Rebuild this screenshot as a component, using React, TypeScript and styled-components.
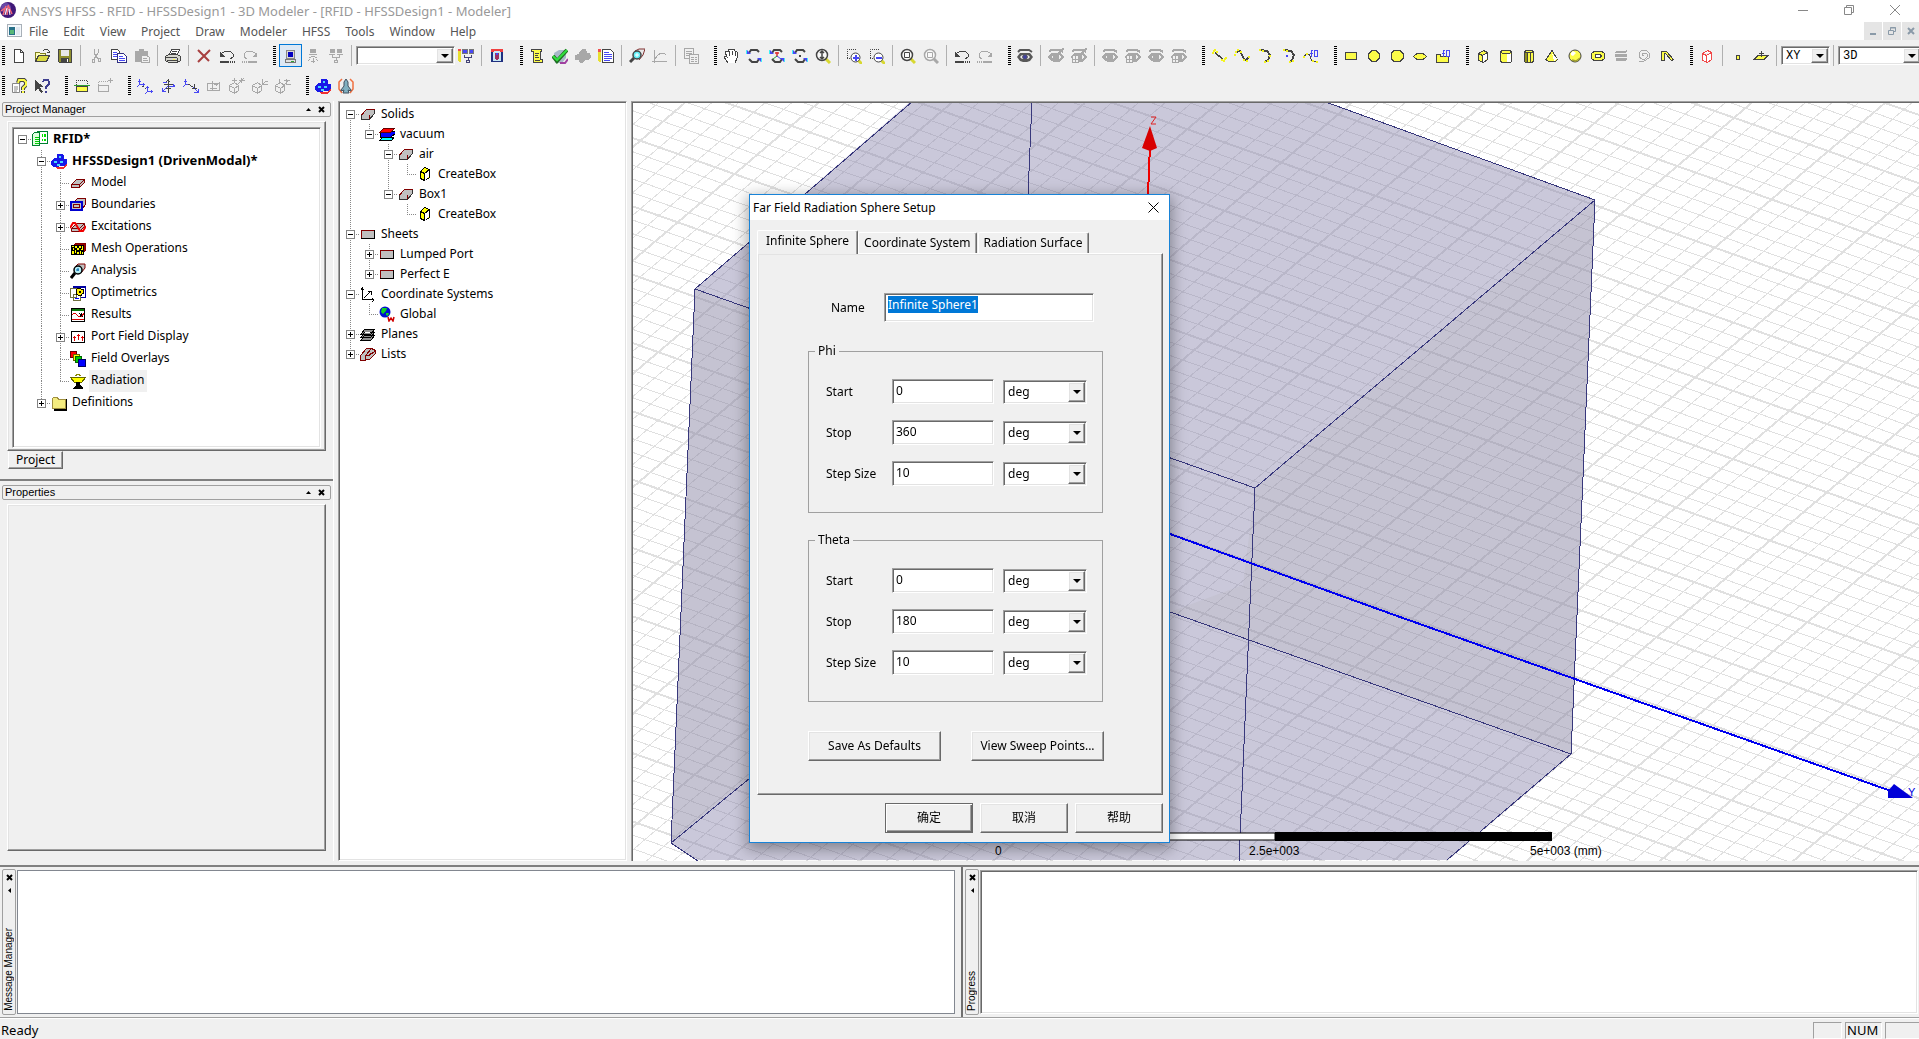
import React from 'react';
import styled, { createGlobalStyle, css } from 'styled-components';

const GlobalStyle = createGlobalStyle`
  *, *::before, *::after { box-sizing: border-box; }
  html, body, #root { height: 100%; }
  body { margin: 0; background: #f0f0f0; color: #000; overflow: hidden; }
  body, button, input, select { font: 12px/16px "Noto Sans", "Noto Sans CJK SC", sans-serif; }
  button, input, select { border-radius: 0; margin: 0; outline: none; }
`;

const sunken = css`
  border: 1px solid;
  border-color: #a0a0a0 #fff #fff #a0a0a0;
  box-shadow: inset 1px 1px #696969, inset -1px -1px #e3e3e3;
`;
const raised = css`
  border: 1px solid;
  border-color: #fff #696969 #696969 #fff;
  box-shadow: inset -1px -1px #a0a0a0, inset 1px 1px #e3e3e3;
`;

/* ---------- Icons ---------- */

const INK = '#444';
const YEL = '#fcfc48';
const BLU = '#4848f4';
const GRY = '#a8a8a8';
const MAR = '#800000';

const Svg = styled.svg`
  display: block;
  flex: none;
`;

const Pic = ({ children, smooth }: { children: React.ReactNode; smooth?: boolean }) => (
  <Svg width="16" height="16" viewBox="0 0 16 16" fill="none" aria-hidden="true" shapeRendering={smooth ? 'auto' : 'crispEdges'}>
    {children}
  </Svg>
);

const arcUndo = (c: string, flip = false) => (
  <g transform={flip ? 'translate(16 0) scale(-1 1)' : undefined}>
    <path d="M2 8l1-3 4-2h4l3 3v3l-3 2" stroke={c} />
    <path d="M1 4v5h5z" fill={c} />
    <path d="M1 13h9v2H1z" fill={c} />
    <path d="M11 13h1v2h-1zM13 13h1v2h-1zM15 13h1v2h-1z" fill={c} />
  </g>
);
const eye = (c: string, iris: string) => (
  <>
    <path d="M1 4l2-2h9l3 2" stroke={c} strokeWidth="2" />
    <path d="M0 9l3-4h10l3 4-3 4-3 1H6l-3-1z" fill={c} />
    <path d="M3 9l2-2h6l2 2-2 2H5z" fill="#eee" />
    <circle cx="8" cy="9" r="2.4" fill={iris} stroke={c} />
  </>
);
const eyeGrid = (
  <>
    {eye(GRY, GRY)}
    <path d="M1.500 7.500h6v7h-6z" fill="#f0f0f0" stroke={GRY} />
    <path d="M1 11h7M4.500 7v8" stroke={GRY} />
  </>
);
const slash = <path d="M10 6l6-6" stroke={GRY} strokeWidth="2" />;
const rotate = (mid: React.ReactNode) => (
  <>
    <path d="M3 5l2-3h6l2 2" stroke={INK} strokeWidth="2" />
    <path d="M13 11l-2 3H6l-3-3" stroke={INK} strokeWidth="2" />
    <path d="M1 2v4h4z" fill={BLU} />
    <path d="M15 14v-4h-4z" fill={BLU} />
    <path d="M0 2h1v4H0zM15 10h1v4h-1z" fill="#40f0f8" />
    {mid}
  </>
);
const lens = (c: string, handle: string, mid: React.ReactNode) => (
  <>
    <path d="M10 10l5 5" stroke={handle} strokeWidth="3" />
    <circle cx="7" cy="7" r="5.500" fill="#fff" fillOpacity="0.600" stroke={c} strokeWidth="1.500" />
    {mid}
  </>
);
const zoomBox = (mid: string) => (
  <>
    <path d="M1.500 10V1.500H10M1 10.500h4" stroke={INK} strokeDasharray="1 1" />
    <path d="M12 12l4 4" stroke="#d8d830" strokeWidth="3" />
    <circle cx="9.500" cy="9.500" r="4.500" fill="#fff" stroke={INK} />
    <path d={mid} stroke={BLU} strokeWidth="2" />
  </>
);
const axes = (a: string, b: string) => (
  <>
    <path d={a} stroke={BLU} />
    <path d={b} stroke={INK} />
  </>
);
const cubeGrey = (extra: string) => (
  <>
    <path d="M.5 7.500l5-3 4 3v5l-4 3-5-3zM.5 7.500l5 3 4-3M5.500 10v5" stroke={GRY} />
    <path d={extra} stroke={GRY} />
  </>
);
const dots = (pts: number[][]) => pts.map(([x, y]) => <rect key={`${x}-${y}`} x={x} y={y} width="2" height="2" fill="#f4f420" />);
const slab = (fill = '#c0c0c0', edge = MAR) => (
  <>
    <path d="M1.500 9.500l5-5h8v3l-5 5h-8z" fill={fill} stroke={edge} />
    <path d="M1.500 9.500h8l5-5M9.500 9.500v3" stroke={edge} />
  </>
);
const cubes = (
  <>
    <path d="M4 14h9l3-4v3l-4 3H6z" fill="#f03030" />
    <path d="M6 1h5l2 2v3h3v5l-3 2H9l-2 1H3l-3-2V8l3-3h3z" fill="#1818e8" />
    <path d="M8 3h2v2H8zM3 8h3v2H3zM9 8h3v2H9zM6 11h3v2H6z" fill="#48d8f8" />
  </>
);

const icons: Record<string, React.ReactNode> = {
  newFile: <path d="M3.500 1.500h6l3 3v10h-9zM9.500 1.500v3h3" fill="#fff" stroke={INK} />,
  open: (
    <>
      <path d="M1.500 13.500v-9h4l1 1h5v3" fill="#ffffb0" stroke="#808020" />
      <path d="M1.500 13.500l3-6h11l-3 6z" fill="#d8d840" stroke={INK} />
      <path d="M9 3l2-2h2l2 2v2M13 4h3" stroke={INK} />
    </>
  ),
  save: (
    <>
      <path d="M1.500 1.500h13v13h-12l-1-1z" fill="#909030" stroke={INK} />
      <path d="M4 2h8v6H4z" fill="#e8e8e8" />
      <path d="M4 10h8v5H4z" fill={INK} />
      <path d="M10 11h1v3h-1z" fill="#fff" />
    </>
  ),
  cut: (
    <>
      <path d="M6 1v4l4 6M10 1v4L6 11" stroke={GRY} />
      <path d="M4 11h2v3H4zM10 10h2v3h-2z" stroke={GRY} />
    </>
  ),
  copy: (
    <>
      <path d="M.5 1.500h6l2 2v8h-8z" fill="#fff" stroke={INK} />
      <path d="M2 4.500h4M2 6.500h5M2 8.500h4" stroke={BLU} />
      <path d="M6.500 5.500h6l3 3v6h-9z" fill="#fff" stroke="#303080" />
      <path d="M8 8.500h4M8 10.500h6M8 12.500h6" stroke={BLU} />
    </>
  ),
  paste: (
    <>
      <path d="M1 3h13v11H1zM5 1h5v3H5z" fill={GRY} />
      <path d="M7.500 7.500h5l3 2v5h-8z" fill="#f0f0f0" stroke={GRY} />
      <path d="M9 10.500h4M9 12.500h5" stroke={GRY} />
    </>
  ),
  print: (
    <>
      <path d="M4.500 6.500l2-5h8l-2 5" fill="#fff" stroke={INK} />
      <path d="M7 3.500h5M6 5.500h5" stroke={INK} />
      <path d="M.5 8.500l3-2h9l3 2v4l-3 2h-9l-3-2z" fill="#d8d8d0" stroke={INK} />
      <path d="M1 9.500h11M2 12.500h10M12.500 10v4" stroke={INK} />
      <path d="M8 11h2v1H8z" fill={YEL} />
    </>
  ),
  remove: <path d="M2 2l6 6 6-6M2 14l6-6 5 5" stroke="#a84040" strokeWidth="2" />,
  undo: arcUndo(INK),
  redo: arcUndo(GRY, true),
  localPc: (
    <>
      <path d="M4.500 2.500h8v8h-8z" fill="#d8d8d8" stroke="#888" />
      <path d="M6 4h5v5H6z" fill="#0000c0" />
      <path d="M3.500 11.500h10v3h-10z" fill="#e0e0e0" stroke="#777" />
      <path d="M9 13h3v1H9z" fill="#30a030" />
    </>
  ),
  remotePc: (
    <>
      <path d="M5 1h6v4H5zM4 6h8v1H4z" fill={GRY} />
      <path d="M4 10l4-2 4 2M3 13l2-2M8.500 10v5M13 13l-2-2M6 13.500h4" stroke={GRY} />
    </>
  ),
  network: (
    <>
      <path d="M2 1h5v4H2zM9 1h5v4H9zM1 6h6v1H1zM9 6h6v1H9z" fill={GRY} />
      <path d="M4.500 7v2.500h7V7M8.500 10v2M6.500 12.500h3v2h-3z" stroke={GRY} />
    </>
  ),
  netEdit: (
    <>
      <path d="M0 2h3v11l-1 2-2-2z" fill="#e8e030" />
      <path d="M0 1h3v2H0z" fill="#f05050" />
      <path d="M4.500 1.500h5v4h-5zM11.500 1.500h4v4h-4z" fill={BLU} stroke="#777" />
      <path d="M6.500 7v2.500h7V7M10.500 10v2M8.500 12.500h3v2h-3z" stroke="#447" />
    </>
  ),
  filter: (
    <>
      <path d="M2.500 2.500h11v11h-11z" fill="#c8e8f4" stroke="#203080" />
      <path d="M2 1h12v3h-2l-2-1H6L4 4H2z" fill="#f04040" />
      <path d="M3 4h1v9H3zM12 4h1v9h-1z" fill="#203080" />
      <path d="M6 5h4v6l-2 1-2-1z" fill="#a03060" />
      <path d="M7 5h2v2H7z" fill={BLU} />
    </>
  ),
  notes: (
    <>
      <path d="M2.500 1.500h10v2h-1v8h2v3h-9v-11h-2z" fill={YEL} stroke={INK} />
      <path d="M6 5.500h4M6 7.500h3M6 9.500h4M6 12.500h5" stroke={INK} />
    </>
  ),
  check: (
    <>
      <path d="M2 5l5-3h7v8l-4 5H3z" fill="#a8b8c8" />
      <path d="M8 15h5l3-4" stroke="#a040a0" strokeWidth="2" />
      <path d="M1 8l4 5L15 2" stroke="#207020" strokeWidth="4" />
      <path d="M1 8l4 4L15 2" stroke="#30e040" strokeWidth="2" />
    </>
  ),
  solve: <path d="M5 3l2-2h4l1 4h3l1 4-3 3h-3l-2 3H5l-1-3H0V7l4-1z" fill={GRY} />,
  noteEdit: (
    <>
      <path d="M0 3h3v10l-1 2-2-2z" fill="#e8e030" />
      <path d="M0 1h3v3H0z" fill="#f05050" />
      <path d="M4.500 1.500h8l3 3v10h-11z" fill="#fff" stroke={INK} />
      <path d="M6 4.500h5M6 6.500h8M6 8.500h8M6 10.500h8M6 12.500h6" stroke={BLU} />
    </>
  ),
  probe: (
    <>
      <path d="M6 3l4-2h6l-2 6-4 5" fill="#e8e8e8" stroke="#803030" />
      <path d="M5 10l-4 4" stroke={INK} strokeWidth="3" />
      <circle cx="8" cy="7" r="4" fill="#60f0f8" stroke={INK} strokeWidth="1.500" />
      <path d="M8 5v4M6 7h4" stroke="#fff" />
    </>
  ),
  plot: <path d="M2.500 2v13M0 13.500h15M3 11l3-4 3-2h3l2 2" stroke={GRY} />,
  report: (
    <>
      <path d="M1.500.5h9v10h-9zM3 3.500h6M3 5.500h6M3 7.500h4" stroke={GRY} />
      <path d="M6.500 6.500h9v9h-9z" fill="#f0f0f0" stroke={GRY} />
      <path d="M8 9.500h3M12 9.500h2M8 11.500h3M12 11.500h2M8 13.500h3M12 13.500h2" stroke={GRY} />
    </>
  ),
  hand: <path d="M5 15L1 9l1-1 2 1-2-5 1-1 2 1 1-3h2l1 1 2-1 1 2 2 1v6l-2 5M6 8V3M9 7V3M12 8V4" fill="#fff" stroke={INK} />,
  rotate: rotate(null),
  rotateAxis: rotate(
    <>
      <path d="M8 9V4M6 5h4" stroke="#e03030" strokeWidth="1.500" />
      <path d="M8 8l4 3" stroke={BLU} />
      <path d="M8 8l-4 3" stroke="#30a030" />
    </>,
  ),
  rotateDot: rotate(<path d="M7 7h2v2H7z" fill={INK} />),
  zoom: lens(INK, '#d8d830', <path d="M7 3v8M5 5l2-2 2 2M5 9l2 2 2-2" stroke={INK} strokeWidth="1.500" />),
  zoomIn: zoomBox('M7 10h6M10 7v6'),
  zoomOut: zoomBox('M7 10h6'),
  fit: lens(INK, '#d8d830', <path d="M4.500 4.500h5v5h-5z" stroke={INK} />),
  fitSel: lens(GRY, GRY, <path d="M4.500 4.500h5v5h-5z" stroke={GRY} />),
  eye: eye('#585858', '#4040a0'),
  eyeOff: <>{eye(GRY, GRY)}{slash}</>,
  eyeGridOff: <>{eyeGrid}{slash}</>,
  eyeShow: eye(GRY, GRY),
  eyeGrid,
  line: (
    <>
      <path d="M4 5l8 6" stroke={INK} strokeWidth="1.500" />
      {dots([[1, 4], [3, 1], [5, 3], [2, 2], [10, 11], [12, 12], [14, 9], [13, 10]])}
    </>
  ),
  spline: (
    <>
      <path d="M2 5l2-2h2l4 8 2 1 2-2" stroke={INK} strokeWidth="1.500" />
      {dots([[0, 6], [1, 3], [3, 1], [6, 3], [9, 11], [12, 12], [14, 8]])}
    </>
  ),
  arc: (
    <>
      <path d="M4 2l6 1 3 4-2 5-3 2" stroke={INK} strokeWidth="2" />
      {dots([[2, 1], [5, 2], [12, 7], [7, 13], [10, 12]])}
    </>
  ),
  arcCenter: (
    <>
      <path d="M5 2l6 1 3 4-2 5-2 2" stroke={INK} strokeWidth="2" />
      {dots([[3, 1], [6, 2], [9, 13], [12, 12]])}
      <path d="M6 7h2v2H6z" fill={BLU} />
    </>
  ),
  eqCurve: (
    <>
      <path d="M1 9l2-3h3l3 7 5 1" stroke={INK} />
      {dots([[0, 8], [3, 5], [9, 12], [13, 13]])}
      <path d="M8.500 9V3l2-1.500M7 5.500h3M11.500 2.500v6h3v-6z" stroke={BLU} />
    </>
  ),
  rect: <path d="M2.500 4.500h11v7h-11z" fill={YEL} stroke={INK} />,
  circle: <path d="M6 2.500h4l3.500 3.500v4L10 13.500H6L2.500 10V6z" fill={YEL} stroke={INK} />,
  hexagon: <path d="M5 2.500h6l3 3v5l-3 3H5l-3-3v-5z" fill={YEL} stroke={INK} />,
  ellipse: <path d="M5 5.500h6l3.500 3L11 11.500H5L1.500 8.500z" fill={YEL} stroke={INK} />,
  eqSurface: (
    <>
      <path d="M1.500 14.500v-8h4v2h8v6z" fill={YEL} stroke={INK} />
      <path d="M8.500 9V3l2-1.500M7 5.500h3M11.500 2.500v6h3v-6z" stroke={BLU} />
    </>
  ),
  box: (
    <>
      <path d="M3.500 5.500l5-3 4 2v7l-4 3-5-2z" fill={YEL} stroke={INK} />
      <path d="M8 7l4-2v6l-4 3z" fill="#fff" />
      <path d="M3.500 5.500l4 2 5-3M7.500 7.500v7" stroke={INK} />
    </>
  ),
  cylinder: (
    <>
      <path d="M2.500 3.500l2-1h7l2 1v10l-2 1h-7l-2-1z" fill={YEL} stroke={INK} />
      <path d="M9 6h4v8H9z" fill="#fff" />
      <path d="M3 4.500l2 1h6l2-1" stroke={INK} />
    </>
  ),
  prism: (
    <>
      <path d="M3.500 3.500l2-1h5l2 1v10l-2 1h-5l-2-1z" fill={YEL} stroke={INK} />
      <path d="M4 5h2v9H4z" fill="#909020" />
      <path d="M3.500 4.500h9M6.500 5v9M9.500 5v9" stroke={INK} />
    </>
  ),
  cone: (
    <>
      <path d="M8 2.500l5.500 9-2 2h-7l-2.500-2z" fill={YEL} stroke={INK} />
      <path d="M8 5l5 6-3 2z" fill="#fff" />
    </>
  ),
  sphere: (
    <>
      <circle cx="8" cy="8" r="6" fill={YEL} stroke={INK} />
      <path d="M4 5l2-2 3 2-3 3-2-1z" fill="#fff" />
      <path d="M13 10l-4 3-4-1" stroke="#a0a030" strokeWidth="1.500" />
    </>
  ),
  torus: (
    <>
      <path d="M4 3.500h8l2.500 2v5l-2.500 2H4l-2.500-2v-5z" fill={YEL} stroke={INK} />
      <path d="M6 6.500h4l1 1v1l-1 1H6l-1-1v-1z" fill="#fff" stroke={INK} />
    </>
  ),
  helix: <path d="M3 3h9l2-1v2l-2 1H2zM2 6h12v3H2zM3 10h11v2l-2 1H3z" fill={GRY} />,
  spiral: <path d="M3 13h5l5-3V5l-3-3H6L3 5v4l3 2h3l2-2V6L9 5 7 5 6 7l2 1" stroke={GRY} />,
  bend: <path d="M2.500 12.500v-9h5l7 8-2 1-6-7h-1v7z" fill={YEL} stroke={INK} />,
  region: <path d="M3.500 5.500l5-3 4 2v7l-4 3-5-2zM3.500 5.500l4 2 5-3M7.500 7.500v7" fill="#fff" stroke="#f04848" />,
  point: <path d="M6.500 7.500h3v4h-3z" fill={YEL} stroke={INK} />,
  plane: (
    <>
      <path d="M1 11.500l4-4h10l-4 4z" fill={YEL} stroke={INK} />
      <path d="M8.500 3v6M6 5.500h5" stroke={INK} />
    </>
  ),
  helpDoc: (
    <>
      <path d="M1.500 5.500h7v9h-7z" fill="#fff" stroke="#888" />
      <path d="M3 9h4M3 11h4M3 13h3" stroke="#888" />
      <path d="M7 5l1-3h5l2 2v3l-3 3v2M12 13v2" stroke={INK} strokeWidth="4" />
      <path d="M7 5l1-3h5l2 2v3l-3 3v2M12 13v2" stroke={YEL} strokeWidth="2" />
    </>
  ),
  whatsThis: (
    <>
      <path d="M1 2v11l3-3 3 5 2-1-3-5h4z" fill={INK} />
      <path d="M9 4l1-2h4l1 2v2l-3 3v2M12 13v2" stroke="#404090" strokeWidth="2" />
    </>
  ),
  cutPlane: (
    <>
      <path d="M2.500 7V2.500h11V7" stroke={INK} strokeDasharray="1 1" />
      <path d="M2.500 8.500h11v5h-11z" fill={YEL} stroke={INK} />
      <path d="M0 7h16v1H0z" fill="#30a030" />
    </>
  ),
  cutPlaneAdd: (
    <>
      <path d="M1.500 7V3.500h9" stroke={GRY} strokeDasharray="1 1" />
      <path d="M1.500 7.500h10v6h-10zM11 2.500h5M13.500 0v5" stroke={GRY} />
    </>
  ),
  moveAxes: axes('M2.500 1v5.500h5M1 3.500h3M6.500 5v3M2 7l-2 2M10.500 8v5.500h5M9 9.500h3M14.500 12v3M10 14l-2 2', 'M5 8l2 1M8 10l1 1'),
  rotateAxes: axes('M8 8.500h6M8 8l-5 5M3 4.500h4M13 6l2 3M2.500 10v3.500H6', 'M8.500 1v14M6 4l2-2 2 2M4 6.500h9M6 10.500h5'),
  offsetAxes: axes('M2.500 1v5.500h4M1 3.500h3M2 7l-2 2M10 9l5 5M15.500 11v4M10.500 14.500h5', 'M5 6l5 3M11.500 6v4M9 10.500h5'),
  faceCs: <path d="M1.500 5.500h12v7h-12zM4 10.500h7M6.500 12V3M10 8l4-4M8 6.500h3" stroke={GRY} />,
  boxCs1: cubeGrey('M5.500 0v5M3 2.500h5M9.500 2.500H16M12.500 0v5M9 6l6-6'),
  boxCs2: cubeGrey('M10.500 1v5.500h5M9 8l5-5M13 3.500h3'),
  boxCs3: cubeGrey('M11.500 1v5.500h4M8 8l6-6M4.500 1v5M9 2.500h6'),
  design: cubes,
  plane3d: (
    <>
      <path d="M4 1L1 4v7l3 4M12 1l3 3v7l-3 4" stroke="#f07040" strokeWidth="1.500" />
      <path d="M8 1l2 3v4l3 4v1l-3-1 1 3H5l1-3-3 1v-1l3-4V4z" fill="#80b0c0" stroke="#405060" />
    </>
  ),
  app: (
    <>
      <circle cx="8" cy="8" r="8" fill="#401878" />
      <circle cx="6" cy="6" r="5" fill="#6848a8" />
      <path d="M3 13L6 4M7 13l1-9M12 12L8 3M1 9l4-3" stroke="#f06878" strokeWidth="1.500" />
      <path d="M5 13l2-7M10 13l-1-6" stroke="#fff" />
    </>
  ),
  mdi: (
    <>
      <path d="M1.500 2.500h14v12h-14z" fill="#f4f8fc" stroke="#a8b0b8" />
      <path d="M3 5h6v8H3z" fill="#287088" />
      <path d="M4 8h4v4H4z" fill="#58b878" />
      <path d="M10 5h4v8h-4z" fill="#e0e8f0" />
    </>
  ),
  project: (
    <>
      <path d="M5.500.5h10v12h-10z" fill="#fff" stroke="#008030" />
      <path d="M10 3h1v3h-1zM12 3h2v3h-2zM10 8h1v2h-1zM12 8h2v2h-2z" fill="#00e000" />
      <path d="M.5 3.500l2-2h5v13h-7z" fill="#e0ffe0" stroke="#008030" />
      <path d="M3 6h4v1H3zM3 8h4v1H3zM3 10h4v1H3zM3 12h4v1H3z" fill="#00d000" />
    </>
  ),
  model: slab(),
  boundaries: (
    <>
      <path d="M4.500 4.500l3-3h8v6l-3 4" fill="#c0c0c0" stroke={MAR} />
      <path d="M1 5h11v8H1z" fill="#c0c0c0" stroke="#0000d0" strokeWidth="2" />
      <path d="M3.500 7.500h6v3h-6z" stroke={MAR} />
    </>
  ),
  excitations: (
    <>
      {slab()}
      <path d="M0 9l3-5 2 0 5 8h3l3-5" stroke="#f00000" strokeWidth="2" />
    </>
  ),
  mesh: (
    <>
      <path d="M3 5l3-3h9v8l-3 3" fill="#900" stroke={MAR} />
      <path d="M1 4h13v10H1z" fill="#000" />
      <path d="M2 5h2v1H2zM5 5h2v2H5zM9 5h2v2H9zM12 5h1v3h-1zM3 7h1v2H3zM7 7h2v2H7zM11 8h2v1h-2zM2 10h2v3H2zM5 9h1v3H5zM7 11h2v2H7zM10 10h1v3h-1zM12 11h1v2h-1z" fill="#ff0" />
    </>
  ),
  analysis: (
    <>
      <path d="M5 4l3-3h7v4l-4 5" fill="#c0c0c0" stroke={MAR} />
      <path d="M5 10l-4 5" stroke="#000" strokeWidth="3" />
      <circle cx="8" cy="7" r="4" fill="#b8f0f8" stroke="#000" strokeWidth="1.500" />
      <path d="M8 5v3M6 7h3" stroke="#06a" />
    </>
  ),
  optimetrics: (
    <>
      <path d="M3.500 1.500h12v11h-12z" fill="#fff" stroke="#0000a0" />
      <path d="M4 1h12v2H4z" fill="#0000a0" />
      <path d="M.5 3.500h6v9h-6zM3.500 9.500h7v6h-7z" fill="#fff" stroke="#707040" />
      <path d="M9 3l2 1 2 0 0 2 1 2-2 1-1 2-3-1-2-1 0-3 1-2z" fill="#fe0" stroke="#000" />
      <path d="M9 6h2v2H9z" fill="#000" />
      <path d="M5 13h4v1H5z" fill="#00f" />
    </>
  ),
  results: (
    <>
      <path d="M1.500 1.500h13v13h-13z" fill="#fff" stroke="#000" />
      <path d="M2 2h12v2H2z" fill="#087808" />
      <path d="M2 8l2-2 2 1 3 3 3-1 2-3M2 12.500h12" stroke="#e00000" />
      <path d="M9 6l4 4M12 6l-2 4" stroke="#000" />
    </>
  ),
  port: (
    <>
      <path d="M1.500 2.500h13v11h-13z" fill="#fff" stroke="#000" />
      <path d="M4.500 12V7M3 8.500h3M8.500 11V5M7 6.500h3M12.500 12V7M11 8.500h3" stroke="#e00000" />
    </>
  ),
  overlays: (
    <>
      <path d="M.5.500h6v6h-6z" fill="#f00" stroke="#600" />
      <path d="M3.500 3.500h6v6h-6z" fill="#ff0" stroke="#660" />
      <path d="M5.500 5.500h6v6h-6z" fill="#0c0" stroke="#060" />
      <path d="M8.500 8.500h7v7h-7z" fill="#00f" stroke="#006" />
    </>
  ),
  radiation: (
    <>
      <path d="M5 3l3-2 3 2" stroke="#880" />
      <path d="M.5 4.500h15l-4 5h-7z" fill="#ff0" stroke="#660" />
      <path d="M6 9h4v3l3 3v1H3v-1l3-3z" fill="#000" />
    </>
  ),
  folder: (
    <>
      <path d="M15.500 4v10.500H3" stroke="#000" strokeWidth="2" />
      <path d="M1.500 13.500v-10l1-1h4l1 2h7v9z" fill="#f4ec80" stroke="#a09040" />
    </>
  ),
  solid: (
    <>
      <path d="M1.500 8.500l5-5h8v4l-5 6h-8z" fill="#c0c0c0" stroke="#333" />
      <path d="M1.500 9l5-5.500h8M9.500 13V9" stroke={MAR} />
    </>
  ),
  material: (
    <>
      <path d="M1 14l3-3h11l-2 3z" fill="#0ff" stroke="#000" />
      <path d="M1 11V8l4-3h11v3l-4 3z" fill="#00f" stroke="#000" />
      <path d="M1 6l4-4h11l-4 4z" fill="#f00" stroke="#600" />
    </>
  ),
  createBox: (
    <>
      <path d="M3.500 5.500l4-4 5 2v8l-5 3-4-2z" fill="#ff0" stroke="#000" />
      <path d="M8 7l4-2v6l-4 3z" fill="#fff" />
      <path d="M3.500 5.500l4 2 5-4M7.500 7.500v7" stroke="#000" />
    </>
  ),
  sheet: (
    <>
      <path d="M1.500 4.500h13v8h-13z" fill="#c0c0c0" stroke="#000" />
      <path d="M1.500 12V4.500H14" stroke={MAR} />
    </>
  ),
  coords: <path d="M2.500 2v11.500H14M1 4l1.500-2L4 4M12 12l2 2-2 2M4 12l7-7M8 5.500h3v3" stroke="#000" />,
  globe: (
    <>
      <circle cx="6" cy="6" r="5.500" fill="#0010d0" />
      <path d="M3 2h5l-1 3-3 3-2-2zM7 7h3l-1 3-2-1z" fill="#10d020" />
      <path d="M9 11l1 4 2-3 2 3 1-4" stroke="#d00000" strokeWidth="1.500" />
    </>
  ),
  planes: (
    <>
      <path d="M1 11l4-5h10l-4 5zM1 14l4-5h10l-4 5zM1 8l4-5h10l-4 5z" fill="#909090" stroke="#000" />
      <path d="M5 6.500h5" stroke="#fff" />
    </>
  ),
  lists: (
    <>
      <path d="M.5 9.500l6-7h5v4l-6 8h-5z" fill="#c0c0c0" stroke={MAR} />
      <path d="M5.500 9.500l6-7 4 2v3l-6 6h-4zM5.500 9.500h4l6-5" fill="#c0c0c0" stroke={MAR} />
    </>
  ),
};

const smoothIcons = new Set(['app', 'globe', 'sphere', 'zoom', 'fit', 'fitSel', 'probe', 'analysis', 'check', 'remove', 'rotate', 'rotateAxis', 'rotateDot', 'eye', 'plane3d', 'excitations', 'helpDoc', 'zoomIn', 'zoomOut']);
const Icon = ({ name }: { name: string }) => <Pic smooth={smoothIcons.has(name)}>{icons[name]}</Pic>;

/* ---------- Frame ---------- */

const Shell = styled.div`
  display: grid;
  grid-template-rows: 20px 20px 61px minmax(0, 1fr) 157px 21px;
  height: 100vh;
`;
const TitleBar = styled.header`
  display: flex;
  align-items: center;
  padding-right: 4px;
  background: #fff;
  color: #999;
`;
const TitleText = styled.h1`
  flex: 1;
  margin: 0;
  padding: 2px 0 0 6px;
  font-size: 13px;
  font-weight: 400;
  line-height: 18px;
`;
const WindowButton = styled.button`
  display: grid;
  place-items: center;
  width: 46px;
  height: 20px;
  padding: 0;
  border: 0;
  background: none;
  color: #888;
`;
const MenuBar = styled.nav`
  display: flex;
  align-items: center;
  padding: 0 2px 0 6px;
  background: #fff;
`;
const MenuList = styled.div`
  display: flex;
  flex: 1;
  gap: 1px;
  padding-top: 3px;
`;
const MenuItem = styled.button`
  padding: 0 7px;
  border: 0;
  background: none;
  color: #555;
  line-height: 17px;
`;
const MdiButton = styled.button`
  display: grid;
  place-items: center;
  width: 18px;
  height: 18px;
  margin: 2px 0 0 1px;
  padding: 0;
  border: 0;
  background: #e5e5e5;
  color: #8a9aa8;
`;

const Toolbars = styled.div`
  display: flex;
  flex-direction: column;
`;
const ToolRow = styled.div`
  display: flex;
  padding: 4px 0;
  & + & { padding: 3px 0; }
`;
const ToolGroup = styled.div`
  display: flex;
  align-items: center;
  padding: 0 9px 0 2px;
  &:last-child { padding-right: 0; flex: 1; min-width: 0; }
`;
const Grip = styled.span`
  flex: none;
  width: 3px;
  height: 19px;
  margin-right: 3px;
  background: repeating-linear-gradient(#000 0 1px, transparent 1px 2px);
`;
const Separator = styled.span`
  flex: none;
  width: 1px;
  height: 21px;
  margin: 0 4px 0 3px;
  background: #b0b0b0;
`;
const ToolButton = styled.button<{ $active?: boolean }>`
  display: grid;
  place-items: start;
  flex: none;
  width: 23px;
  height: 23px;
  padding: 3px 0 0 2px;
  border: 1px solid ${(p) => (p.$active ? '#0078d7' : 'transparent')};
  background: ${(p) => (p.$active ? '#dde8f4' : 'none')};
`;
const DropWrap = styled.span<{ $w: number; $h?: number; $grow?: boolean }>`
  ${sunken}
  display: flex;
  flex: ${(p) => (p.$grow ? '1 1' : '0 0')} ${(p) => p.$w}px;
  min-width: 0;
  height: ${(p) => p.$h ?? 19}px;
  padding: 1px 1px 1px 2px;
  background: #fff;
`;
const DropSelect = styled.select<{ $mono?: boolean }>`
  flex: 1;
  min-width: 0;
  padding: 0 2px;
  border: 0;
  appearance: none;
  background: #fff;
  color: #000;
  line-height: 16px;
  ${(p) => p.$mono && 'font-family: "Liberation Mono", monospace;'}
`;
const DropArrow = styled.span`
  ${raised}
  display: grid;
  place-items: center;
  flex: none;
  width: 17px;
  background: #f0f0f0;
  &::after {
    content: '';
    border: solid transparent;
    border-width: 4px 4px 0;
    border-top-color: #000;
  }
`;
type DropProps = { label: string; options: string[]; w: number; h?: number; grow?: boolean; mono?: boolean };
const Dropdown = ({ label, options, w, h, grow, mono }: DropProps) => (
  <DropWrap $w={w} $h={h} $grow={grow}>
    <DropSelect aria-label={label} $mono={mono}>
      {options.map((o) => <option key={o}>{o}</option>)}
    </DropSelect>
    <DropArrow />
  </DropWrap>
);

/* ---------- Docked panes ---------- */

const Workspace = styled.main`
  display: grid;
  grid-template-columns: 334px 289px minmax(0, 1fr);
  column-gap: 4px;
  min-height: 0;
`;
const Docks = styled.div`
  display: grid;
  grid-template-rows: 380px minmax(0, 1fr);
  min-height: 0;
  border-right: 1px solid #fff;
`;
const Dock = styled.section<{ $divider?: boolean }>`
  display: flex;
  flex-direction: column;
  min-height: 0;
  padding: ${(p) => (p.$divider ? '1px 2px 0' : '4px 2px 10px')};
  ${(p) => p.$divider && 'border-bottom: 2px solid #808080;'}
`;
const DockCaption = styled.header`
  display: flex;
  align-items: center;
  flex: none;
  height: 15px;
  padding: 0 2px;
  border: 1px solid #a0a0a0;
  border-radius: 2px;
`;
const DockTitle = styled.h2`
  flex: 1;
  margin: 0;
  font: 400 11px/13px "Liberation Sans", sans-serif;
`;
const DockButton = styled.button`
  display: grid;
  place-items: center;
  width: 13px;
  height: 13px;
  padding: 0;
  border: 0;
  background: none;
`;
const DockFrame = styled.div`
  ${raised}
  flex: 1;
  min-height: 0;
  margin: 4px 5px 0;
  padding: 5px 4px 2px;
`;
const DockTab = styled.button`
  align-self: flex-start;
  flex: none;
  height: 18px;
  margin: 0 0 10px 6px;
  padding: 0 7px;
  border: 1px solid;
  border-color: transparent #696969 #696969 #fff;
  background: #f0f0f0;
  line-height: 16px;
  box-shadow: inset -1px -1px #a0a0a0;
`;
const TreePane = styled.ul<{ $framed?: boolean }>`
  ${sunken}
  height: 100%;
  margin: 0;
  padding: ${(p) => (p.$framed ? '0' : '2px 0 0 2px')};
  overflow: hidden;
  background: #fff;
  list-style: none;
`;

/* ---------- Trees ---------- */

type Cell = ' ' | '|' | 'T' | 'L' | '-' | '+';
type Node = { rails: string; icon: string; label: string; above?: boolean; below?: boolean; bold?: boolean; selected?: boolean };

const vDots = 'repeating-linear-gradient(#888 0 1px, transparent 1px 2px)';
const hDots = 'repeating-linear-gradient(90deg, #888 0 1px, transparent 1px 2px)';

const Rail = styled.span<{ $up: boolean; $down: boolean; $right: boolean }>`
  display: grid;
  place-items: center;
  flex: none;
  width: 19px;
  height: 100%;
  background-repeat: no-repeat;
  background-image: ${vDots}, ${vDots}, ${hDots};
  background-position: 9px 0, 9px 100%, 100% 50%;
  background-size:
    ${(p) => (p.$up ? '1px 50%' : '0 0')},
    ${(p) => (p.$down ? '1px 50%' : '0 0')},
    ${(p) => (p.$right ? '10px 1px' : '0 0')};
`;
const Toggle = styled.button<{ $open: boolean }>`
  width: 9px;
  height: 9px;
  padding: 0;
  border: 1px solid #848484;
  background:
    linear-gradient(#000, #000) center / 5px 1px no-repeat,
    linear-gradient(#000, #000) center / ${(p) => (p.$open ? '0 0' : '1px 5px')} no-repeat,
    #fff;
`;
const TreeRow = styled.li<{ $h: number }>`
  display: flex;
  align-items: center;
  height: ${(p) => p.$h}px;
`;
const TreeLabel = styled.span<{ $bold?: boolean; $selected?: boolean }>`
  height: 100%;
  margin-left: 3px;
  padding: 2px;
  font-size: ${(p) => (p.$bold ? 13 : 12)}px;
  font-weight: ${(p) => (p.$bold ? 700 : 400)};
  background: ${(p) => (p.$selected ? '#f0f0f0' : 'none')};
  white-space: nowrap;
`;

const Tree = ({ nodes, rowHeight }: { nodes: Node[]; rowHeight: number }) => (
  <>
    {nodes.map((n, i) => (
      <TreeRow key={i} $h={rowHeight}>
        {(n.rails.split('') as Cell[]).map((c, j) => {
          const toggle = c === '-' || c === '+';
          return (
            <Rail
              key={j}
              $up={toggle ? n.above !== false : c !== ' '}
              $down={toggle ? !!n.below : c === '|' || c === 'T'}
              $right={toggle || c === 'T' || c === 'L'}
            >
              {toggle && <Toggle type="button" $open={c === '-'} aria-label={`Toggle ${n.label}`} />}
            </Rail>
          );
        })}
        <Icon name={n.icon} />
        <TreeLabel $bold={n.bold} $selected={n.selected}>{n.label}</TreeLabel>
      </TreeRow>
    ))}
  </>
);

const projectNodes: Node[] = [
  { rails: '-', icon: 'project', label: 'RFID*', bold: true, above: false },
  { rails: ' -', icon: 'design', label: 'HFSSDesign1 (DrivenModal)*', bold: true, below: true },
  { rails: ' |T', icon: 'model', label: 'Model' },
  { rails: ' |+', icon: 'boundaries', label: 'Boundaries', below: true },
  { rails: ' |+', icon: 'excitations', label: 'Excitations', below: true },
  { rails: ' |T', icon: 'mesh', label: 'Mesh Operations' },
  { rails: ' |T', icon: 'analysis', label: 'Analysis' },
  { rails: ' |T', icon: 'optimetrics', label: 'Optimetrics' },
  { rails: ' |T', icon: 'results', label: 'Results' },
  { rails: ' |+', icon: 'port', label: 'Port Field Display', below: true },
  { rails: ' |T', icon: 'overlays', label: 'Field Overlays' },
  { rails: ' |L', icon: 'radiation', label: 'Radiation', selected: true },
  { rails: ' +', icon: 'folder', label: 'Definitions' },
];

const modelNodes: Node[] = [
  { rails: '-', icon: 'solid', label: 'Solids', above: false, below: true },
  { rails: '|-', icon: 'material', label: 'vacuum' },
  { rails: '| -', icon: 'solid', label: 'air', below: true },
  { rails: '| |L', icon: 'createBox', label: 'CreateBox' },
  { rails: '| -', icon: 'solid', label: 'Box1' },
  { rails: '|  L', icon: 'createBox', label: 'CreateBox' },
  { rails: '-', icon: 'sheet', label: 'Sheets', below: true },
  { rails: '|+', icon: 'sheet', label: 'Lumped Port', below: true },
  { rails: '|+', icon: 'sheet', label: 'Perfect E' },
  { rails: '-', icon: 'coords', label: 'Coordinate Systems', below: true },
  { rails: '|L', icon: 'globe', label: 'Global' },
  { rails: '+', icon: 'planes', label: 'Planes', below: true },
  { rails: '+', icon: 'lists', label: 'Lists' },
];

/* ---------- 3D view ---------- */

const Viewport = styled.section`
  min-width: 0;
  min-height: 0;
  border: solid #a0a0a0;
  border-width: 1px 0 0 1px;
  box-shadow: inset 1px 1px #696969;
  padding: 1px 2px 0 1px;
`;
const Scene = styled.svg`
  display: block;
  width: 100%;
  height: 100%;
  background: #fff;
`;

const SHALLOW = 0.354;
const STEEP = 0.85;
const gridLines = () => {
  const thin: string[] = [];
  const thick: string[] = [];
  for (let i = -60; i < 90; i++) {
    const y0 = 455 - 800 * SHALLOW + i * 13.67;
    (i % 5 === 0 ? thick : thin).push(`M0 ${y0.toFixed(1)}L1600 ${(y0 + 1600 * SHALLOW).toFixed(1)}`);
  }
  for (let i = -70; i < 60; i++) {
    const x0 = 1250 + 455 / STEEP + i * 26.67;
    (i % 5 === 0 ? thick : thin).push(`M${x0.toFixed(1)} 0L${(x0 - 1000 / STEEP).toFixed(1)} 1000`);
  }
  return { thin: thin.join(''), thick: thick.join('') };
};

const SceneView = () => {
  const grid = gridLines();
  return (
    <Scene role="img" aria-label="3D model view" fontFamily='"Liberation Sans", sans-serif' fontSize="12">
      <g transform="translate(0 2)">
        <g stroke="#e0e0e0" shapeRendering="crispEdges">
          <path d={grid.thin} transform="translate(0 -2)" />
          <path d={grid.thick} strokeWidth="2" transform="translate(0 -2)" />
        </g>
        <path d="M62 184L278-4H690L962 95 938 649 814 755H65L38 738z" fill="#8985ad" fillOpacity="0.45" />
        <path d="M622 383L962 95 938 649 537 507 610 480zM62 184L117 204V673L38 738z" fill="#70705a" fillOpacity="0.06" />
        <path
          d="M280-4L62 184 622 383 962 95 690-4M62 184L38 738 65 756M38 738L117 673M399-4L395 90M622 383L606 756M537 507L938 649 962 95M938 649L814 755"
          stroke="#38387c" fill="none" shapeRendering="crispEdges"
        />
        <path d="M515 90L517 40" stroke="#f00000" strokeWidth="2" shapeRendering="crispEdges" />
        <path d="M517 21L524 43 517 46 509 43z" fill="#d80000" />
        <path d="M518 12h5l-5 7h5" fill="none" stroke="#e02020" />
        <path d="M537 429L767 512 1258 686" stroke="#0000f0" strokeWidth="2" fill="none" shapeRendering="crispEdges" />
        <path d="M1261 679L1280 693H1255V686z" fill="#0000d8" />
        <text x="1275" y="691" fill="#0000e0" fontSize="11">Y</text>
        <path d="M365 728h277v7H365z" fill="#fff" stroke="#000" />
        <path d="M642 727h277v9H642z" />
        <text x="362" y="750">0</text>
        <text x="616" y="750">2.5e+003</text>
        <text x="897" y="750">5e+003 (mm)</text>
      </g>
    </Scene>
  );
};

/* ---------- Lower docks and status ---------- */

const Lower = styled.div`
  display: grid;
  grid-template-columns: 961px minmax(0, 1fr);
  margin-top: 4px;
  border-top: 2px solid #808080;
  border-bottom: 1px solid #a0a0a0;
`;
const LowerDock = styled.section`
  display: flex;
  gap: 1px;
  min-width: 0;
  padding: 2px 4px 2px 2px;
  & + & { border-left: 2px solid #707070; }
  &:first-child { padding-right: 6px; }
`;
const SideCaption = styled.header`
  display: flex;
  flex-direction: column;
  align-items: center;
  width: 14px;
  padding: 1px 0 3px;
  border: 1px solid #a0a0a0;
  border-radius: 2px;
`;
const SideTitle = styled.h2`
  margin: auto 0 0;
  writing-mode: vertical-rl;
  transform: rotate(180deg);
  font: 400 10px/12px "Liberation Sans", sans-serif;
`;
const LogBox = styled.div<{ $sunken?: boolean }>`
  flex: 1;
  margin: 1px 0;
  background: #fff;
  ${(p) => (p.$sunken ? sunken : 'border: 1px solid #828790;')}
`;
const StatusBar = styled.footer`
  display: flex;
  gap: 3px;
  border-top: 1px solid #fff;
  padding: 3px 0 0 1px;
  font: 13px/17px "Noto Sans", sans-serif;
`;
const StatusText = styled.span`
  flex: 1;
`;
const StatusCell = styled.span<{ $w: number }>`
  flex: none;
  width: ${(p) => p.$w}px;
  padding-left: 1px;
  border: 1px solid;
  border-color: #a0a0a0 #fff #fff #a0a0a0;
  line-height: 15px;
`;

/* ---------- Dialog ---------- */

const Overlay = styled.div`
  position: fixed;
  inset: 0;
  display: grid;
  place-items: center;
  padding-bottom: 2px;
`;
const DialogBox = styled.section`
  width: 421px;
  border: 1px solid #1883d7;
  background: #f0f0f0;
  box-shadow: 0 4px 14px 2px rgba(0, 0, 0, 0.35);
`;
const DialogTitle = styled.header`
  display: flex;
  align-items: center;
  justify-content: space-between;
  height: 25px;
  padding-left: 3px;
  background: #fff;
`;
const DialogHeading = styled.h2`
  margin: 0;
  font-size: 12px;
  font-weight: 400;
`;
const DialogClose = styled.button`
  display: grid;
  place-items: center;
  width: 31px;
  height: 25px;
  padding: 0;
  border: 0;
  background: none;
`;
const DialogBody = styled.div`
  padding: 10px 6px 9px 7px;
`;
const TabList = styled.div`
  display: flex;
  align-items: flex-end;
  height: 23px;
`;
const TabButton = styled.button<{ $active?: boolean }>`
  flex: none;
  height: ${(p) => (p.$active ? 24 : 21)}px;
  margin-bottom: ${(p) => (p.$active ? -1 : 0)}px;
  margin-right: ${(p) => (p.$active ? 0 : 1)}px;
  padding: 0 ${(p) => (p.$active ? 8 : 5)}px;
  padding-bottom: ${(p) => (p.$active ? 3 : 0)}px;
  border: 1px solid;
  border-color: #fff #696969 transparent #fff;
  border-bottom: 0;
  border-radius: 2px 2px 0 0;
  background: #f0f0f0;
  box-shadow: inset -1px 0 #a0a0a0;
  color: #000;
  white-space: nowrap;
`;
const TabPanel = styled.div`
  ${raised}
  display: flex;
  flex-direction: column;
  padding: 39px 58px 33px 50px;
`;
const NameRow = styled.div`
  display: flex;
  align-items: center;
  margin-bottom: 20px;
  padding-left: 23px;
`;
const NameLabel = styled.label`
  flex: none;
  width: 53px;
`;
const NameInput = styled.input`
  ${sunken}
  width: 210px;
  height: 29px;
  padding: 2px 3px 8px;
  background: #fff;
  &::selection { background: #0078d7; color: #fff; }
`;
const Group = styled.fieldset`
  width: 295px;
  height: 171px;
  margin: 0 0 18px;
  padding: 19px 15px 0 17px;
  border: 1px solid #a0a0a0;
`;
const GroupTitle = styled.legend`
  margin-left: -11px;
  padding: 0 3px;
  line-height: 18px;
`;
const FieldRow = styled.div`
  display: grid;
  grid-template-columns: 66px 102px 84px;
  align-items: center;
  margin-bottom: 16px;
`;
const ValueInput = styled.input`
  ${sunken}
  width: 102px;
  height: 25px;
  padding: 1px 3px 3px;
  background: #fff;
`;
const UnitCell = styled.div`
  display: flex;
  margin-left: 9px;
  width: 84px;
`;
const ButtonRow = styled.div<{ $end?: boolean }>`
  display: flex;
  justify-content: ${(p) => (p.$end ? 'flex-end' : 'space-between')};
  gap: 7px;
  margin-top: ${(p) => (p.$end ? 8 : 11)}px;
`;
const PushButton = styled.button<{ $wide?: boolean; $default?: boolean }>`
  ${raised}
  width: ${(p) => (p.$wide ? 133 : 88)}px;
  height: 30px;
  padding: 0;
  background: #f0f0f0;
  color: #000;
  white-space: nowrap;
  ${(p) => p.$default && css`
    border-color: #696969;
    box-shadow: inset 1px 1px #fff, inset -1px -1px #696969, inset -2px -2px #a0a0a0;
  `}
`;

const SweepGroup = ({ title, stop }: { title: string; stop: string }) => (
  <Group>
    <GroupTitle>{title}</GroupTitle>
    {[['Start', '0'], ['Stop', stop], ['Step Size', '10']].map(([label, value]) => {
      const id = `${title}-${label}`.toLowerCase().replace(' ', '-');
      return (
        <FieldRow key={label}>
          <label htmlFor={id}>{label}</label>
          <ValueInput id={id} defaultValue={value} />
          <UnitCell>
            <Dropdown label={`${title} ${label} unit`} options={['deg', 'rad']} w={84} h={24} />
          </UnitCell>
        </FieldRow>
      );
    })}
  </Group>
);

const SphereDialog = () => {
  const nameRef = React.useRef<HTMLInputElement>(null);
  React.useEffect(() => {
    nameRef.current?.focus();
    nameRef.current?.select();
  }, []);
  return (
    <Overlay>
      <DialogBox role="dialog" aria-labelledby="sphere-title">
        <DialogTitle>
          <DialogHeading id="sphere-title">Far Field Radiation Sphere Setup</DialogHeading>
          <DialogClose type="button" aria-label="Close">
            <Svg width="11" height="11" viewBox="0 0 11 11" stroke="#000"><path d="M.5.500l10 10M10.500.500l-10 10" /></Svg>
          </DialogClose>
        </DialogTitle>
        <DialogBody>
          <TabList role="tablist">
            <TabButton type="button" role="tab" aria-selected $active>Infinite Sphere</TabButton>
            <TabButton type="button" role="tab" aria-selected={false}>Coordinate System</TabButton>
            <TabButton type="button" role="tab" aria-selected={false}>Radiation Surface</TabButton>
          </TabList>
          <TabPanel role="tabpanel">
            <NameRow>
              <NameLabel htmlFor="sphere-name">Name</NameLabel>
              <NameInput id="sphere-name" ref={nameRef} defaultValue="Infinite Sphere1" />
            </NameRow>
            <SweepGroup title="Phi" stop="360" />
            <SweepGroup title="Theta" stop="180" />
            <ButtonRow>
              <PushButton type="button" $wide>Save As Defaults</PushButton>
              <PushButton type="button" $wide>View Sweep Points...</PushButton>
            </ButtonRow>
          </TabPanel>
          <ButtonRow $end>
            <PushButton type="button" $default>确定</PushButton>
            <PushButton type="button">取消</PushButton>
            <PushButton type="button">帮助</PushButton>
          </ButtonRow>
        </DialogBody>
      </DialogBox>
    </Overlay>
  );
};

/* ---------- Assembly ---------- */

const Tools = ({ items }: { items: string }) => (
  <>
    {items.split(' ').map((name, i) =>
      name === '|' ? <Separator key={i} /> : (
        <ToolButton key={i} type="button" aria-label={name} $active={name === 'localPc'}><Icon name={name} /></ToolButton>
      ),
    )}
  </>
);

const glyph = (d: string, size = 12, width = 1) => (
  <Svg width={size} height={size} viewBox={`0 0 ${size} ${size}`} fill="none" stroke="currentColor" strokeWidth={width} aria-hidden="true"><path d={d} /></Svg>
);
const CLOSE = 'M1 1l5 5M6 1l-5 5';

const DockHead = ({ title }: { title: string }) => (
  <DockCaption>
    <DockTitle>{title}</DockTitle>
    <DockButton type="button" aria-label="Expand"><Svg width="5" height="3" viewBox="0 0 5 3"><path d="M0 3l2.500-3L5 3z" /></Svg></DockButton>
    <DockButton type="button" aria-label="Close">{glyph(CLOSE, 7, 2)}</DockButton>
  </DockCaption>
);
const SideHead = ({ title }: { title: string }) => (
  <SideCaption>
    <DockButton type="button" aria-label="Close">{glyph(CLOSE, 7, 2)}</DockButton>
    <DockButton type="button" aria-label="Collapse"><Svg width="3" height="5" viewBox="0 0 3 5"><path d="M3 0L0 2.500 3 5z" /></Svg></DockButton>
    <SideTitle>{title}</SideTitle>
  </SideCaption>
);

const toolGroups = [
  'notes check solve noteEdit | probe plot | report',
  'hand rotate rotateAxis rotateDot zoom | zoomIn zoomOut | fit fitSel | undo redo',
  'eye | eyeOff eyeGridOff | eyeShow eyeGrid eyeShow eyeGrid',
  'line spline arc arcCenter eqCurve',
  'rect circle hexagon ellipse eqSurface',
  'box cylinder prism cone sphere torus helix spiral bend',
];

export default function App() {
  return (
    <>
      <GlobalStyle />
      <Shell>
        <TitleBar>
          <Icon name="app" />
          <TitleText>ANSYS HFSS - RFID - HFSSDesign1 - 3D Modeler - [RFID - HFSSDesign1 - Modeler]</TitleText>
          <WindowButton type="button" aria-label="Minimize">{glyph('M1 6.500h10')}</WindowButton>
          <WindowButton type="button" aria-label="Restore">{glyph('M1.500 3.500h7v7h-7zM3.500 3V1.500h7v7H9')}</WindowButton>
          <WindowButton type="button" aria-label="Close">{glyph('M1 1l10 10M11 1L1 11')}</WindowButton>
        </TitleBar>
        <MenuBar>
          <Icon name="mdi" />
          <MenuList>
            {['File', 'Edit', 'View', 'Project', 'Draw', 'Modeler', 'HFSS', 'Tools', 'Window', 'Help'].map((m) => (
              <MenuItem key={m} type="button">{m}</MenuItem>
            ))}
          </MenuList>
          <MdiButton type="button" aria-label="Minimize document">{glyph('M3 9h6', 12, 2)}</MdiButton>
          <MdiButton type="button" aria-label="Restore document">{glyph('M2.500 5.500h5v4h-5zM4.500 5V2.500h5v4H8M4 3h6')}</MdiButton>
          <MdiButton type="button" aria-label="Close document">{glyph('M3 3l6 6M9 3l-6 6', 12, 2)}</MdiButton>
        </MenuBar>
        <Toolbars>
          <ToolRow>
            <ToolGroup>
              <Grip />
              <Tools items="newFile open save | cut copy paste | print | remove undo redo" />
            </ToolGroup>
            <ToolGroup>
              <Grip />
              <Tools items="localPc remotePc network |" />
              <Dropdown label="Variable" options={['']} w={99} />
              <Tools items="netEdit | filter" />
            </ToolGroup>
            {toolGroups.map((g) => (
              <ToolGroup key={g}>
                <Grip />
                <Tools items={g} />
              </ToolGroup>
            ))}
            <ToolGroup>
              <Grip />
              <Tools items="region | point plane |" />
              <Dropdown label="Drawing plane" options={['XY', 'YZ', 'XZ']} w={49} mono />
              <Separator />
              <Dropdown label="Movement mode" options={['3D', 'In Plane']} w={60} grow mono />
            </ToolGroup>
          </ToolRow>
          <ToolRow>
            <ToolGroup><Grip /><Tools items="helpDoc whatsThis" /></ToolGroup>
            <ToolGroup><Grip /><Tools items="cutPlane cutPlaneAdd" /></ToolGroup>
            <ToolGroup><Grip /><Tools items="moveAxes rotateAxes offsetAxes faceCs boxCs1 boxCs2 boxCs3" /></ToolGroup>
            <ToolGroup><Grip /><Tools items="design plane3d" /></ToolGroup>
          </ToolRow>
        </Toolbars>
        <Workspace>
          <Docks>
            <Dock $divider>
              <DockHead title="Project Manager" />
              <DockFrame>
                <TreePane $framed><Tree nodes={projectNodes} rowHeight={22} /></TreePane>
              </DockFrame>
              <DockTab type="button">Project</DockTab>
            </Dock>
            <Dock>
              <DockHead title="Properties" />
              <DockFrame />
            </Dock>
          </Docks>
          <TreePane><Tree nodes={modelNodes} rowHeight={20} /></TreePane>
          <Viewport><SceneView /></Viewport>
        </Workspace>
        <Lower>
          <LowerDock>
            <SideHead title="Message Manager" />
            <LogBox />
          </LowerDock>
          <LowerDock>
            <SideHead title="Progress" />
            <LogBox $sunken />
          </LowerDock>
        </Lower>
        <StatusBar>
          <StatusText>Ready</StatusText>
          <StatusCell $w={29} />
          <StatusCell $w={37} >NUM</StatusCell>
          <StatusCell $w={37} />
        </StatusBar>
      </Shell>
      <SphereDialog />
    </>
  );
}
